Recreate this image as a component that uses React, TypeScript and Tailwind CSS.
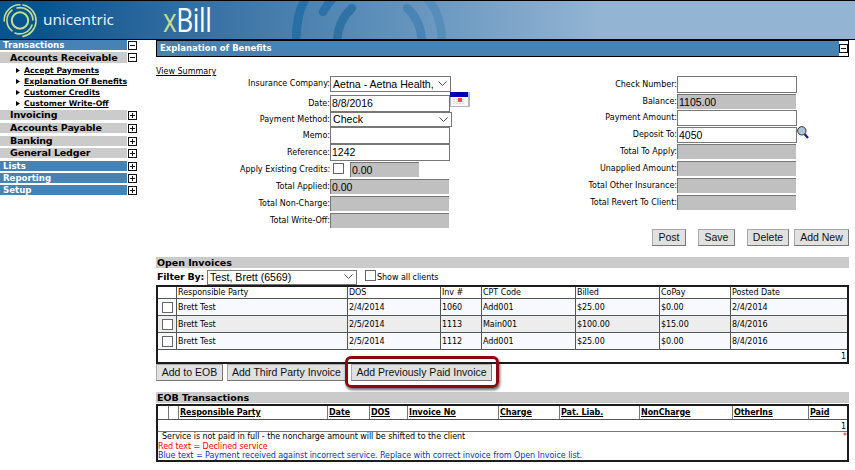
import React from 'react';
import clsx from 'clsx';

const invoices = [
    {party: 'Brett Test', dos: '2/4/2014', inv: '1060', cpt: 'Add001', billed: '$25.00', copay: '$0.00', posted: '2/4/2014'},
    {party: 'Brett Test', dos: '2/5/2014', inv: '1113', cpt: 'Main001', billed: '$100.00', copay: '$15.00', posted: '8/4/2016'},
    {party: 'Brett Test', dos: '2/5/2014', inv: '1112', cpt: 'Add001', billed: '$25.00', copay: '$0.00', posted: '8/4/2016'},
];

const invoiceHead = ['Responsible Party', 'DOS', 'Inv #', 'CPT Code', 'Billed', 'CoPay', 'Posted Date'];
const eobHead = ['Responsible Party', 'Date', 'DOS', 'Invoice No', 'Charge', 'Pat. Liab.', 'NonCharge', 'OtherIns', 'Paid'];
const invoiceCols = 'grid grid-cols-[19px_171px_93px_41px_94px_84px_71px_1fr]';

function Toggle({open}: {open?: boolean}) {
    return (
        <svg width="9" height="9" viewBox="0 0 9 9" className="block shrink-0" shapeRendering="crispEdges">
            <rect x="0.5" y="0.5" width="8" height="8" fill="#fff" stroke="#111"/>
            <path d={open ? 'M2 4.5h5' : 'M2 4.5h5M4.5 2v5'} stroke="#111"/>
        </svg>
    );
}

function MenuRow({label, open, sub, className}: {label: string; open?: boolean; sub?: boolean; className?: string}) {
    return (
        <div className={clsx('flex items-center gap-px', className)}>
            <div className={clsx(
                'flex w-[127px] items-center self-stretch font-bold leading-none whitespace-nowrap',
                sub ? 'bg-[#cbcbcb] pl-2.5 text-[9.5px] tracking-[-0.15px] text-black' : 'bg-[#4682b4] pl-[3px] text-[8.6px] text-white',
            )}>
                {label}
            </div>
            <Toggle open={open}/>
        </div>
    );
}

function Sidebar() {
    const links = ['Accept Payments', 'Explanation Of Benefits', 'Customer Credits', 'Customer Write-Off'];
    return (
        <nav className="w-[156px] shrink-0">
            <MenuRow label="Transactions" open className="h-2.5"/>
            <MenuRow label="Accounts Receivable" open sub className="mt-0.5 h-[11px]"/>
            <ul className="mt-0.5 h-[45px]">
                {links.map((link) => (
                    <li key={link} className="flex h-[11px] items-center gap-1 pl-4">
                        <svg width="4" height="5" viewBox="0 0 4 5"><path d="M0 0L4 2.5L0 5z"/></svg>
                        <a className="text-[7.75px] leading-none font-bold whitespace-nowrap underline">{link}</a>
                    </li>
                ))}
            </ul>
            <MenuRow label="Invoicing" sub className="h-2.5"/>
            <MenuRow label="Accounts Payable" sub className="mt-[3px] h-2.5"/>
            <MenuRow label="Banking" sub className="mt-[3px] h-2.5"/>
            <MenuRow label="General Ledger" sub className="mt-[2px] h-2.5"/>
            <MenuRow label="Lists" className="mt-[3px] h-2.5"/>
            <MenuRow label="Reporting" className="mt-[2px] h-2.5"/>
            <MenuRow label="Setup" className="mt-[2px] h-2.5"/>
        </nav>
    );
}

function Header() {
    return (
        <header className="relative flex h-10 items-center border-y border-black bg-linear-to-r from-[#07558f] from-5% via-[#5e90ba] via-45% to-[#93b4d3] to-70%">
            <svg className="absolute inset-0" width="855" height="38" viewBox="0 1 855 38" fill="none" strokeLinecap="round">
                <g strokeWidth="8.5">
                    <path d="M307 -4C299 8 296 22 296 44" stroke="#286fa5"/>
                    <path d="M323 12C325 8 328 4 333 -2" stroke="#2c70a5"/>
                    <path d="M352 8C342 17 337 28 337 44" stroke="#2f73a5"/>
                    <path d="M407 8C417 17 422 28 422 44" stroke="#4a84b4"/>
                    <path d="M424 -4C436 6 442 22 442 44" stroke="#578db9"/>
                </g>
            </svg>
            <svg className="relative ml-[3px]" width="34" height="36" viewBox="0 0 34 36" fill="none" stroke="#c5dd8f" strokeWidth="1.6" strokeLinecap="round">
                <circle cx="17" cy="18.5" r="8.2" strokeWidth="2"/>
                <path d="M9 8.2A13 13 0 0 0 9 28.8"/>
                <path d="M12 31A13 13 0 0 0 29 23"/>
                <path d="M17 2.8A15.7 15.7 0 0 0 1.2 19"/>
                <path d="M14 6A13 13 0 0 1 30 18"/>
                <path d="M20 3A16 16 0 0 1 33 20A16 16 0 0 1 20 34.4"/>
            </svg>
            <span className="relative ml-1.5 w-[72px] pb-px font-['Noto_Sans'] text-[15.3px] leading-none tracking-[-0.05px] text-[#e4f0fa]">unicentric</span>
            <span className="relative ml-12 origin-left scale-x-[0.82] font-['Open_Sans'] text-[32px] leading-none tracking-[-0.5px] text-white">
                <span className="text-[#c5dd8f]">x</span>Bill
            </span>
        </header>
    );
}

function Label({children}: {children: string}) {
    return <label className="w-[90px] shrink-0 text-right text-[8px] leading-none whitespace-nowrap">{children}</label>;
}

function Field({label, value, disabled, className}: {label: string; value?: string; disabled?: boolean; className?: string}) {
    return (
        <div className={clsx('flex items-center', className)}>
            <Label>{label}</Label>
            <div className={clsx(
                "flex items-center self-stretch pl-px font-['Liberation_Sans'] text-[10.5px] leading-none",
                disabled ? 'w-[119px] border-t border-l border-[#777] bg-[#c0c0c0]' : 'w-[120px] border border-[#777] bg-white',
            )}>
                {value}
            </div>
        </div>
    );
}

function Select({value, className}: {value: string; className?: string}) {
    return (
        <div className={clsx("flex items-center justify-between border border-[#777] bg-white pr-[3px] pl-0.5 font-['Liberation_Sans'] text-[10.6px] leading-none whitespace-nowrap", className)}>
            {value}
            <svg width="9" height="6" viewBox="0 0 9 6" fill="none" stroke="#555"><path d="M0.5 0.5L4.5 4.5L8.5 0.5"/></svg>
        </div>
    );
}

function Box({className}: {className?: string}) {
    return <span className={clsx('block size-[11px] shrink-0 border border-[#666] bg-white', className)}/>;
}

function Btn({children, className}: {children: string; className?: string}) {
    return (
        <button className={clsx("flex h-[17px] items-center justify-center border border-[#aaa] border-r-[#777] border-b-[#777] bg-[#e1e1e1] font-['Liberation_Sans'] text-[10.5px] leading-none whitespace-nowrap text-[#111]", className)}>
            {children}
        </button>
    );
}

function Form() {
    return (
        <section className="flex h-[152px] pt-[19px]">
            <div className="w-[84px] text-[8px] leading-none">
                <div className="-mt-2 whitespace-nowrap underline">View Summary</div>
            </div>
            <div className="w-[347px]">
                <div className="flex items-center">
                    <Label>Insurance Company:</Label>
                    <Select value="Aetna - Aetna Health," className="h-4 w-[121px]"/>
                </div>
                <div className="mt-[3px] flex">
                    <Field label="Date:" value="8/8/2016" className="h-[17px]"/>
                    <svg className="-mt-[3px]" width="20" height="15" viewBox="0 0 20 15" shapeRendering="crispEdges">
                        <rect width="20" height="15" fill="#b5b5b5"/>
                        <rect x="1" y="4" width="17" height="10" fill="#f6f6fa"/>
                        <rect width="18" height="5" fill="#0000b4"/>
                        <path d="M3 7.5h12M3 9.5h12M3 11.5h12" stroke="#d5d5df" strokeDasharray="2 1"/>
                        <rect x="8" y="6" width="4" height="4" fill="#f44"/>
                    </svg>
                </div>
                <div className="flex items-center">
                    <Label>Payment Method:</Label>
                    <Select value="Check" className="h-[15px] w-[122px]"/>
                </div>
                <Field label="Memo:" className="h-[17px]"/>
                <Field label="Reference:" value="1242" className="h-[17px]"/>
                <div className="flex h-[17px] items-center">
                    <Label>Apply Existing Credits:</Label>
                    <Box className="mb-0.5 ml-[3px]"/>
                    <div className="ml-1.5 h-[15px] w-[69px] border-t border-l border-[#777] bg-[#c0c0c0] pt-0.5 pl-px font-['Liberation_Sans'] text-[10.5px] leading-none">0.00</div>
                </div>
                <Field label="Total Applied:" value="0.00" disabled className="mt-px h-[15px]"/>
                <Field label="Total Non-Charge:" disabled className="mt-0.5 h-[15px]"/>
                <Field label="Total Write-Off:" disabled className="mt-0.5 h-[15px]"/>
            </div>
            <div>
                <Field label="Check Number:" className="h-[17px]"/>
                <Field label="Balance:" value="1105.00" disabled className="mt-px h-[15px]"/>
                <Field label="Payment Amount:" className="mt-px h-4"/>
                <div className="mt-px flex">
                    <Field label="Deposit To:" value="4050" className="h-4"/>
                    <svg className="-mt-px" width="12" height="13" viewBox="0 0 12 13" fill="none">
                        <path d="M7.5 8L11 12" stroke="#1a1a9c" strokeWidth="2.2"/>
                        <circle cx="4.8" cy="4.8" r="4.2" fill="#a9c4d8" stroke="#333"/>
                    </svg>
                </div>
                <Field label="Total To Apply:" disabled className="mt-px h-[15px]"/>
                <Field label="Unapplied Amount:" disabled className="mt-0.5 h-[15px]"/>
                <Field label="Total Other Insurance:" disabled className="mt-0.5 h-[15px]"/>
                <Field label="Total Revert To Client:" disabled className="mt-0.5 h-[15px]"/>
            </div>
        </section>
    );
}

function SectionTitle({children}: {children: string}) {
    return <h2 className="flex h-[11px] items-center bg-[#cbcbcb] pl-px text-[9.5px] leading-none font-bold tracking-[-0.05px]">{children}</h2>;
}

function OpenInvoices() {
    return (
        <section>
            <SectionTitle>Open Invoices</SectionTitle>
            <div className="flex h-[17px] items-center">
                <span className="w-[51px] pl-px text-[9.5px] leading-none font-bold tracking-[-0.2px] whitespace-nowrap">Filter By:</span>
                <Select value="Test, Brett (6569)" className="mt-px h-[15px] w-[150px]"/>
                <Box className="mb-0.5 ml-2"/>
                <span className="ml-px pt-0.5 text-[8px] leading-none tracking-[-0.05px]">Show all clients</span>
            </div>
            <div className="h-[79px] border-2 border-[#1c1c1c] text-[8px] leading-none tracking-[-0.05px]">
                <div className={clsx(invoiceCols, 'h-3 border-b border-[#555]')}>
                    <div className="border-r border-[#555]"/>
                    {invoiceHead.map((h) => (
                        <div key={h} className="flex items-center border-r border-[#555] pt-px pl-px last:border-r-0">{h}</div>
                    ))}
                </div>
                {invoices.map((row) => (
                    <div key={row.inv} className={clsx(invoiceCols, 'h-[17px] border-b border-[#555] odd:bg-[#ededed] even:bg-[#f8f8ff]')}>
                        <div className="flex items-center border-r border-[#555] pl-1"><Box/></div>
                        {Object.values(row).map((cell, i) => (
                            <div key={i} className="flex items-center border-r border-[#555] pt-0.5 pl-px last:border-r-0">{cell}</div>
                        ))}
                    </div>
                ))}
                <div className="pt-[3px] pr-px text-right">1</div>
            </div>
            <div className="flex h-[28px]">
                <Btn className="w-[67px]">Add to EOB</Btn>
                <Btn className="ml-1 w-[119px]">Add Third Party Invoice</Btn>
                <div className="relative z-10 -mt-2 -ml-px h-8 w-[154px] rounded-md border-[3px] border-[#8c0712] bg-transparent pt-[5px] pl-[3px] shadow-[1px_2px_3px_rgba(0,0,0,0.6)]">
                    <Btn className="w-[141px]">Add Previously Paid Invoice</Btn>
                </div>
            </div>
        </section>
    );
}

function EobTransactions() {
    return (
        <section>
            <SectionTitle>EOB Transactions</SectionTitle>
            <div className="mt-px h-[58px] border-2 border-[#1c1c1c] text-[8px] leading-none">
                <div className="grid h-3.5 grid-cols-[11px_10px_149px_42px_38px_91px_61px_80px_93px_76px_1fr] border-b border-[#555]">
                    <div className="border-r border-[#777]"/>
                    <div className="border-r border-[#777]"/>
                    {eobHead.map((h) => (
                        <div key={h} className="flex items-center border-r border-[#777] pl-px font-bold tracking-[-0.05px] underline last:border-r-0">{h}</div>
                    ))}
                </div>
                <div className="h-3 border-b border-[#777] pt-[3px] pr-px text-right">1</div>
                <div className="flex h-[9px] items-center justify-between pt-px pl-1 tracking-[-0.05px]">
                    <span>Service is not paid in full - the noncharge amount will be shifted to the client</span>
                    <span className="text-[#f00]">*</span>
                </div>
                <div className="flex h-[9px] items-center pt-0.5 tracking-[-0.07px] text-[#f00]">Red text = Declined service</div>
                <div className="flex h-[10px] items-center pt-0.5 tracking-[-0.07px] text-[#0a32d2]">Blue text = Payment received against incorrect service. Replace with correct invoice from Open Invoice list.</div>
            </div>
        </section>
    );
}

export default function App() {
    return (
        <div className="h-[470px] w-[855px] overflow-hidden bg-white font-['DejaVu_Sans',sans-serif] text-black">
            <Header/>
            <div className="flex">
                <Sidebar/>
                <main className="w-[693px]">
                    <div className="flex h-[17px] items-center justify-between border border-black bg-[#4682b4]">
                        <h1 className="pl-[3px] text-[8.5px] leading-none font-bold text-white">Explanation of Benefits</h1>
                        <div className="flex items-center self-stretch bg-white"><Toggle open/></div>
                    </div>
                    <Form/>
                    <div className="mt-5 flex h-[28px] justify-end">
                        <Btn className="w-[34px]">Post</Btn>
                        <Btn className="ml-3 w-[37px]">Save</Btn>
                        <Btn className="ml-3 w-[42px]">Delete</Btn>
                        <Btn className="ml-[5px] w-[55px]">Add New</Btn>
                    </div>
                    <OpenInvoices/>
                    <EobTransactions/>
                </main>
            </div>
        </div>
    );
}
